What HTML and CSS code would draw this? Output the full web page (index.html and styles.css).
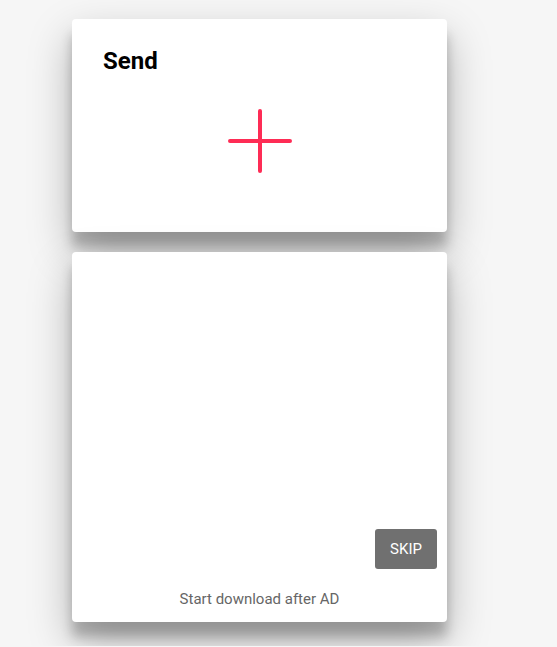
FILE: index.html
```html
<!DOCTYPE html>
<html>
<head>
<meta charset="utf-8">
<link rel="stylesheet" href="styles.css">
</head>
<body>
<div class="page">
<main class="stack">
  <section class="card send-card">
    <h2 class="title">Send</h2>
    <div class="add">
      <svg width="64" height="64" viewBox="0 0 64 64" aria-hidden="true">
        <path d="M32 2V62M2 32H62" stroke="#fe2c55" stroke-width="4" stroke-linecap="round" fill="none"/>
      </svg>
    </div>
  </section>
  <section class="card ad-card">
    <div class="ad-area"></div>
    <button class="skip">SKIP</button>
    <p class="note">Start download after AD</p>
  </section>
</main>
</div>
</body>
</html>
```
FILE: styles.css
```css
html, body {
  margin: 0;
  padding: 0;
  background: #f6f6f6;
  font-family: Roboto, "Noto Sans", sans-serif;
}
.page {
  height: 646px;
  overflow: hidden;
}
.stack {
  display: flex;
  flex-direction: column;
  gap: 20px;
  width: 375px;
  padding: 19px 0 0 72px;
}
.card {
  background: #fff;
  border-radius: 4px;
  box-shadow: 0 19px 44px rgba(0,0,0,0.28), 0 15px 12px rgba(0,0,0,0.22);
}
.send-card {
  height: 213px;
  box-sizing: border-box;
  padding: 27px 31px 0;
  display: flex;
  flex-direction: column;
}
.title {
  margin: 0;
  font-size: 24px;
  line-height: 30px;
  font-weight: 700;
  color: #000;
}
.add {
  display: flex;
  justify-content: center;
  margin-top: 33px;
  margin-left: 1px;
}
.ad-card {
  height: 370px;
  box-sizing: border-box;
  display: flex;
  flex-direction: column;
  padding: 0 10px 13px;
}
.ad-area {
  flex: 1;
}
.skip {
  align-self: flex-end;
  width: 62px;
  height: 40px;
  border: 0;
  border-radius: 3px;
  background: #707070;
  color: #fff;
  font-family: Roboto, sans-serif;
  font-size: 15px;
  padding: 0;
}
.note {
  margin: 20px 0 0;
  text-align: center;
  font-size: 15px;
  line-height: 20px;
  color: #666;
}
```
